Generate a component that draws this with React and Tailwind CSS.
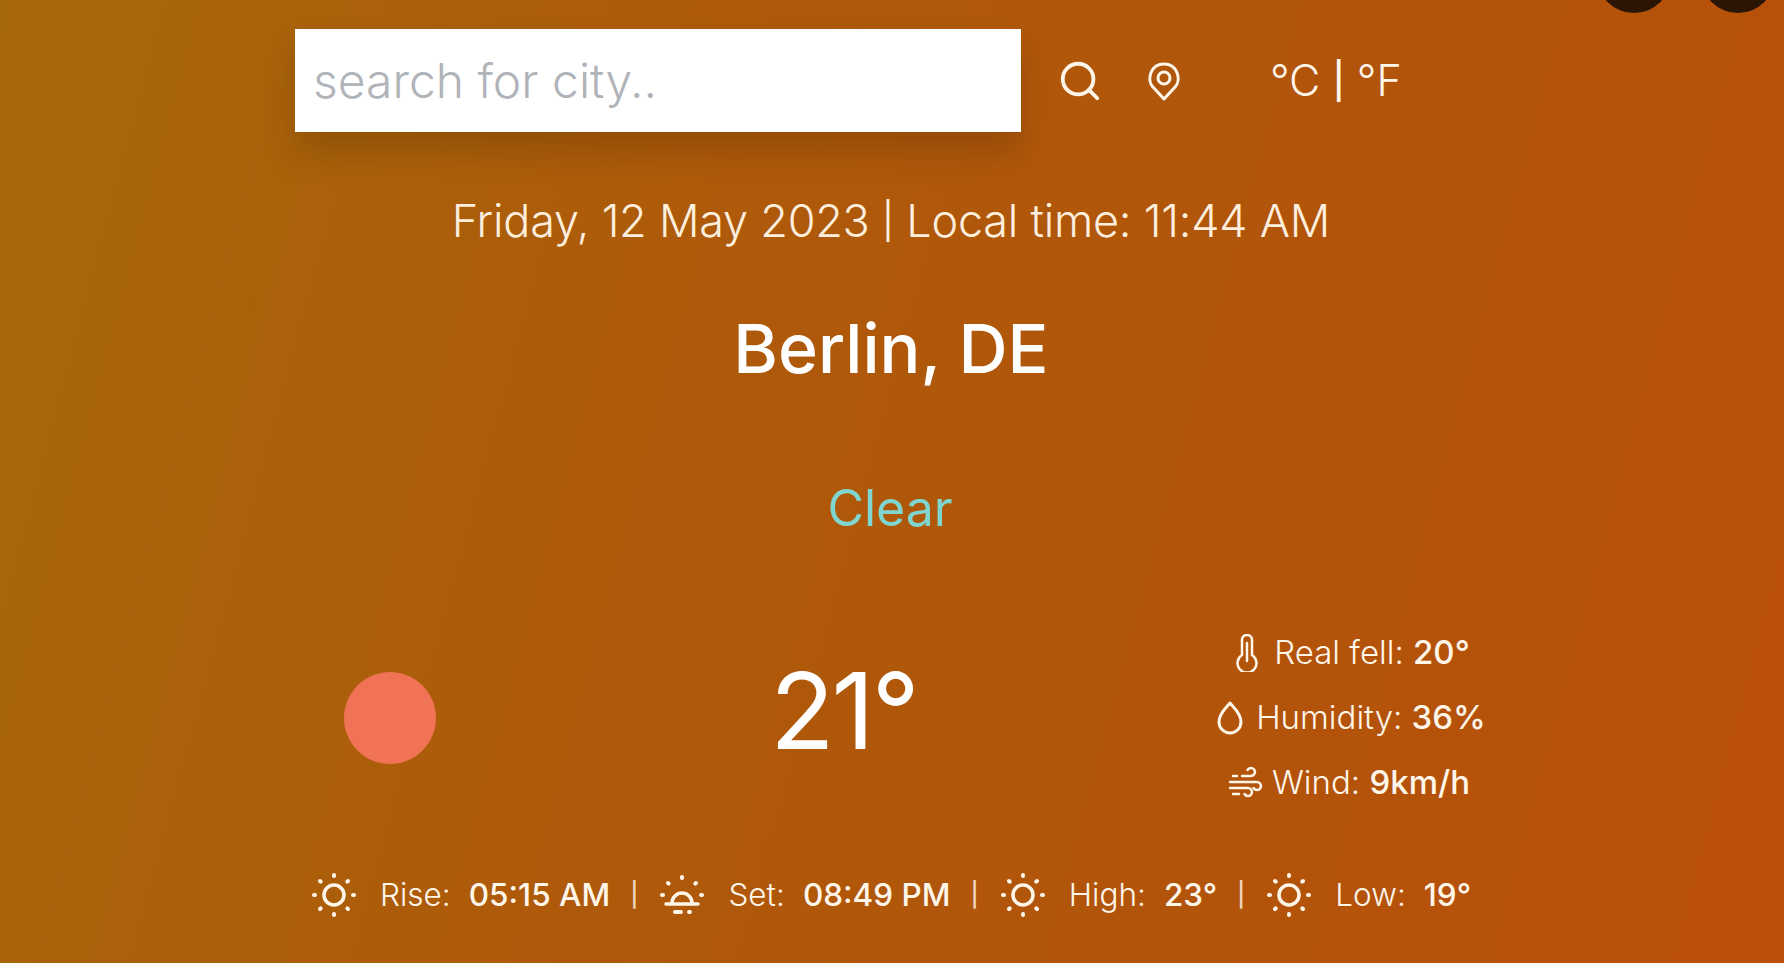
import React from 'react';
import { Search } from 'lucide-react';

const SunIcon = ({ size = 48 }) => (
  <svg width={size} height={size} viewBox="0 0 48 48" fill="none" stroke="currentColor" strokeLinecap="round" className="shrink-0">
    <circle cx="24" cy="24" r="10" strokeWidth="3.500" />
    <path strokeWidth="4" d="M24 4v1M24 43v1M4 24h1M43 24h1M10 10l.7.7M37.300 37.300l.7.7M10 38l.7-.7M37.300 10.700l.7-.7" />
  </svg>
);

const SunsetIcon = ({ size = 48 }) => (
  <svg width={size} height={size} viewBox="0 0 48 48" fill="none" stroke="currentColor" strokeLinecap="round" className="shrink-0">
    <path strokeWidth="3.500" d="M14 32a10 10 0 0 1 20 0M8 33h32" />
    <path strokeWidth="4" d="M24 6v1M4 24h1M43 24h1M10 12l.7.7M37.300 12.700l.7-.7M17 41h6M31 41h1" />
  </svg>
);

const PinIcon = ({ size = 40 }) => (
  <svg width={size} height={size} viewBox="0 0 40 40" fill="none" stroke="currentColor" strokeWidth="3" className="shrink-0">
    <path strokeLinejoin="round" d="M20 38 8.500 25.500C3 19 6 3 20 3s17 16 11.500 22.500z" />
    <circle cx="20" cy="17" r="6" />
  </svg>
);

const ThermometerIcon = ({ size = 38 }) => (
  <svg width={size} height={size} viewBox="0 0 38 38" fill="none" stroke="currentColor" className="shrink-0">
    <path strokeWidth="2.500" d="M14 21V6a5 5 0 0 1 10 0v15a9.500 9.500 0 1 1-10 0z" />
    <path strokeWidth="2.500" strokeLinecap="round" d="M19 9v18" />
  </svg>
);

const DropIcon = ({ size = 36 }) => (
  <svg width={size} height={size} viewBox="0 0 36 36" fill="none" stroke="currentColor" strokeWidth="3" className="shrink-0">
    <path strokeLinejoin="round" d="M18 3c3 4 11 10 11 19a11 11 0 0 1-22 0C7 13 15 7 18 3z" />
  </svg>
);

const WindIcon = ({ size = 36 }) => (
  <svg width={size} height={size} viewBox="0 0 36 36" fill="none" stroke="currentColor" strokeWidth="2.500" strokeLinecap="round" className="shrink-0">
    <path d="M14 11h9a4 4 0 1 0-3.500-6M2 17h27a4 4 0 1 1-3.500 6M5 11h4M2 23h18a4 4 0 1 1-3.500 6M5 29h6" />
  </svg>
);

const details = [
  { Icon: ThermometerIcon, label: 'Real fell:', value: '20°' },
  { Icon: DropIcon, label: 'Humidity:', value: '36%' },
  { Icon: WindIcon, label: 'Wind:', value: '9km/h' },
];

const forecast = [
  { Icon: SunIcon, label: 'Rise:', value: '05:15 AM' },
  { Icon: SunsetIcon, label: 'Set:', value: '08:49 PM' },
  { Icon: SunIcon, label: 'High:', value: '23°' },
  { Icon: SunIcon, label: 'Low:', value: '19°' },
];

export default function App() {
  return (
    <div className="relative h-[963px] overflow-hidden bg-[linear-gradient(105deg,#a76809_0%,#ae5a0a_38%,#b2540a_70%,#bb4f0a_100%)] font-['Inter','Open_Sans',sans-serif] text-[#fff6ea]">
      {/* Top right buttons */}
      <div className="absolute right-[9px] -top-[62px] flex gap-[30px]">
        <div className="w-[74px] h-[75px] rounded-full bg-[#2b1606]"></div>
        <div className="w-[74px] h-[75px] rounded-full bg-[#2b1606]"></div>
      </div>

      <div className="w-[1200px] ml-[292px] pt-[29px]">
        {/* Search */}
        <div className="flex items-center">
          <input
            placeholder="search for city.."
            className="w-[726px] h-[103px] ml-[3px] px-[18px] bg-white text-[48px] font-light shadow-[0_20px_30px_rgba(60,30,0,0.22)] placeholder:text-[#b0b3b8] outline-none"
          />
          <Search size={46} strokeWidth={2} className="ml-[36px]" />
          <div className="ml-[41px]">
            <PinIcon />
          </div>
          <div className="ml-[86px] flex items-center gap-[12px] text-[43px] font-light leading-none whitespace-nowrap">
            <span>°C</span>
            <span className="text-[36px] font-medium">|</span>
            <span>°F</span>
          </div>
        </div>

        {/* Date and city */}
        <p className="mt-[61px] ml-[-2px] text-center text-[45px] font-light tracking-[-0.005em] leading-[56px] text-[#fdeedd] whitespace-nowrap">
          Friday, 12 May 2023 <span className="text-[36px] font-normal align-[3px]">|</span> Local time: 11:44 AM
        </p>
        <h1 className="mt-[59px] ml-[-2px] text-center text-[68px] font-medium leading-[80px] text-white">Berlin, DE</h1>
        <p className="mt-[94px] ml-[-4px] text-center text-[50px] font-normal leading-[52px] text-[#7fd6cf]">Clear</p>

        {/* Current conditions */}
        <div className="flex items-center mt-[98px] h-[171px]">
          <div className="ml-[52px] w-[92px] h-[92px] rounded-full bg-[#f07355] shrink-0"></div>
          <div className="ml-[334px] mb-[14px] w-[160px] text-[106px] font-normal tracking-[-0.03em] leading-none text-white">21°</div>
          <div className="ml-[284px] w-[270px] flex flex-col items-center gap-[24px] text-[33px] leading-[41px] font-light whitespace-nowrap">
            {details.map(({ Icon, label, value }) => (
              <div key={label} className="flex items-center gap-[8px]">
                <Icon />
                <span>
                  {label} <span className="font-medium">{value}</span>
                </span>
              </div>
            ))}
          </div>
        </div>

        {/* Sun times */}
        <div className="flex items-center mt-[68px] ml-[18px] text-[31.5px] font-light leading-[44px] whitespace-nowrap">
          {forecast.map(({ Icon, label, value }, index) => (
            <React.Fragment key={label}>
              {index > 0 && <span className="mx-[20px] text-[24px] font-medium opacity-80">|</span>}
              <Icon />
              <span className="ml-[22px]">{label}</span>
              <span className="ml-[18px] font-medium">{value}</span>
            </React.Fragment>
          ))}
        </div>
      </div>
    </div>
  );
}
